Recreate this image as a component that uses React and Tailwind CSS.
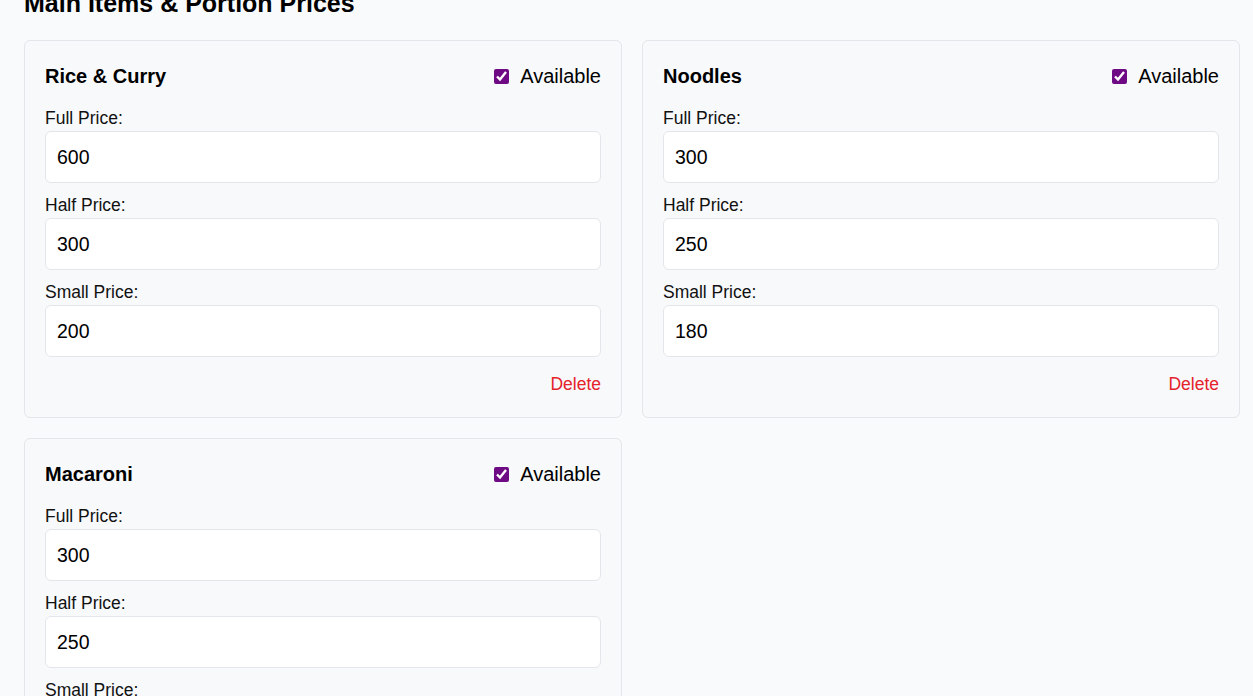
import React, { useState } from 'react';

const initialItems = [
  { id: 1, name: 'Rice & Curry', available: true, full: '600', half: '300', small: '200' },
  { id: 2, name: 'Noodles', available: true, full: '300', half: '250', small: '180' },
  { id: 3, name: 'Macaroni', available: true, full: '300', half: '250', small: '150' },
];

const PriceField = ({ label, value, onChange }) => (
  <div className="mb-[12px]">
    <label className="block text-[17.5px] leading-[20px] mb-[3px] text-[#111]">{label}</label>
    <input
      type="text"
      value={value}
      onChange={(e) => onChange(e.target.value)}
      className="w-full h-[52px] px-[11px] bg-white border border-[#e3e6ea] rounded-[6px] text-[19.5px] text-black outline-none"
    />
  </div>
);

const ItemCard = ({ item, onUpdate, onDelete }) => (
  <div className="bg-[#f8f9fb] border border-[#e3e6ea] rounded-[6px] px-[20px] pt-[20px] pb-[20px]">
    {/* header */}
    <div className="flex items-center justify-between h-[30px] mb-[17px]">
      <h3 className="text-[20px] font-bold text-black">{item.name}</h3>
      <label className="flex items-center gap-[11px] text-[20px] text-black">
        <input
          type="checkbox"
          checked={item.available}
          onChange={(e) => onUpdate({ available: e.target.checked })}
          className="w-[15px] h-[15px] accent-[#6e0a84]"
        />
        Available
      </label>
    </div>

    <PriceField label="Full Price:" value={item.full} onChange={(v) => onUpdate({ full: v })} />
    <PriceField label="Half Price:" value={item.half} onChange={(v) => onUpdate({ half: v })} />
    <PriceField label="Small Price:" value={item.small} onChange={(v) => onUpdate({ small: v })} />

    {/* last field's margin collapses into this one */}
    <div className="flex justify-end mt-[14px]">
      <button onClick={onDelete} className="h-[26px] text-[17.5px] text-[#e5232b]">
        Delete
      </button>
    </div>
  </div>
);

export default function App() {
  const [items, setItems] = useState(initialItems);

  const updateItem = (id, patch) =>
    setItems((prev) => prev.map((it) => (it.id === id ? { ...it, ...patch } : it)));

  const deleteItem = (id) => setItems((prev) => prev.filter((it) => it.id !== id));

  return (
    <div className="min-h-screen bg-[#f9fafb] overflow-hidden font-['Liberation_Sans',Arial,sans-serif]">
      <div className="-mt-[11px] pl-[24px] pr-[13px]">
        <h2 className="text-[25px] leading-[29px] font-bold text-black mb-[22px]">
          Main Items &amp; Portion Prices
        </h2>
        <div className="grid grid-cols-2 gap-[20px]">
          {items.map((item) => (
            <ItemCard
              key={item.id}
              item={item}
              onUpdate={(patch) => updateItem(item.id, patch)}
              onDelete={() => deleteItem(item.id)}
            />
          ))}
        </div>
      </div>
    </div>
  );
}
